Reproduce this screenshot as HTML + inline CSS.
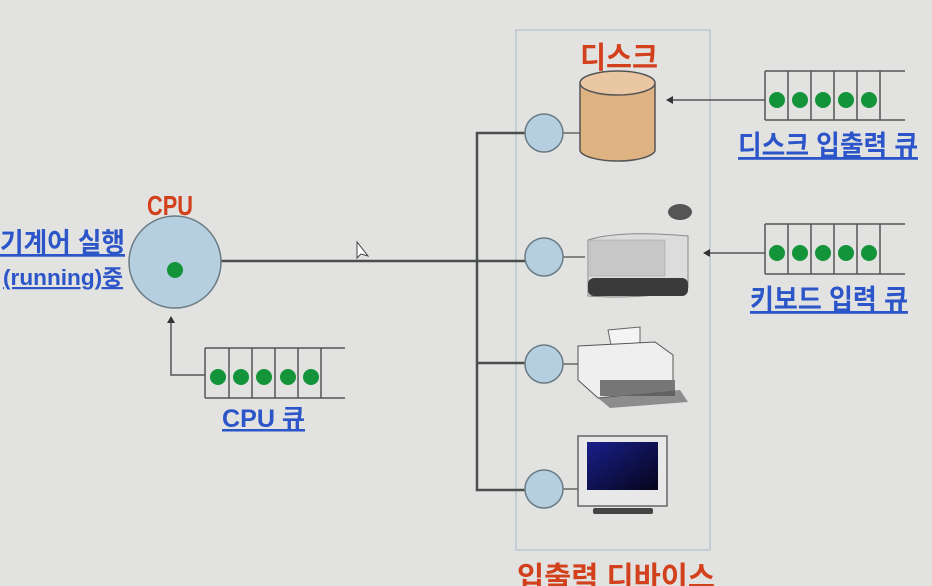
<!DOCTYPE html>
<html><head><meta charset="utf-8"><style>
body{margin:0;background:#e2e2e0;}
svg{display:block}
text{font-family:"Liberation Sans","Noto Sans CJK KR",sans-serif;font-weight:bold}
.b{fill:#2b55c8;text-decoration:underline}
.r{fill:#d2401c}
</style></head><body>
<svg width="932" height="586" viewBox="0 0 932 586">
<defs>
<linearGradient id="scr" x1="0" y1="0" x2="1" y2="1"><stop offset="0" stop-color="#1a1f8a"/><stop offset="1" stop-color="#05051a"/></linearGradient>
</defs>
<rect width="932" height="586" fill="#e2e2e0"/>
<rect x="516" y="30" width="194" height="520" fill="none" stroke="#aab8cc" stroke-width="1"/>
<g stroke="#4a4f4d" stroke-width="2.5" fill="none">
<line x1="221" y1="261" x2="525" y2="261"/>
<polyline points="525,133 477,133 477,490 525,490"/>
<line x1="477" y1="363" x2="525" y2="363"/>
</g>
<g stroke="#666" stroke-width="1.5">
<line x1="563" y1="133" x2="580" y2="133"/><line x1="563" y1="257" x2="585" y2="257"/>
<line x1="563" y1="364" x2="580" y2="364"/><line x1="563" y1="489" x2="580" y2="489"/>
</g>
<circle cx="175" cy="262" r="46" fill="#b6cfe0" stroke="#6b7b84" stroke-width="1.5"/>
<circle cx="175" cy="270" r="8" fill="#14943a"/>
<g fill="#b6cfe0" stroke="#6b7b84" stroke-width="1.5">
<circle cx="544" cy="133" r="19"/><circle cx="544" cy="257" r="19"/><circle cx="544" cy="364" r="19"/><circle cx="544" cy="489" r="19"/>
</g>
<!-- disk -->
<path d="M580 83 V151 A38 12 0 0 0 655 151 V83" fill="#deb281" stroke="#555" stroke-width="1.5"/>
<ellipse cx="617.5" cy="83" rx="37.5" ry="12" fill="#e8c7a2" stroke="#555" stroke-width="1.5"/>
<!-- keyboard -->
<path d="M588 240 Q620 230 688 236 L688 288 Q650 300 588 296 Z" fill="#dcdcdc" stroke="#888"/>
<rect x="590" y="240" width="75" height="36" fill="#c8c8c8" stroke="#999" stroke-width="0.5"/>
<rect x="588" y="278" width="100" height="18" rx="6" fill="#3a3a3a"/>
<ellipse cx="680" cy="212" rx="12" ry="8" fill="#555"/>
<!-- printer -->
<path d="M608 330 L640 327 L640 348 L612 350 Z" fill="#f4f4f4" stroke="#666"/>
<path d="M578 346 L655 342 L673 355 L673 390 L598 398 L578 380 Z" fill="#efefef" stroke="#555"/>
<rect x="600" y="380" width="75" height="16" fill="#777"/>
<path d="M598 398 L680 390 L688 402 L610 408 Z" fill="#555" opacity=".6"/>
<!-- monitor -->
<rect x="578" y="436" width="89" height="70" fill="#e8e8e8" stroke="#666" stroke-width="1.5"/>
<rect x="587" y="442" width="71" height="48" fill="url(#scr)"/>
<rect x="593" y="508" width="60" height="6" rx="2" fill="#444"/>
<!-- queues -->
<g stroke="#555" stroke-width="1.5" fill="none">
<path d="M765 71 H905 M765 120 H905 M765 71 V120 M788 71 V120 M811 71 V120 M834 71 V120 M857 71 V120 M880 71 V120"/>
<path d="M765 224 H905 M765 274 H905 M765 224 V274 M788 224 V274 M811 224 V274 M834 224 V274 M857 224 V274 M880 224 V274"/>
<path d="M205 348 H345 M205 398 H345 M205 348 V398 M229 348 V398 M252 348 V398 M275 348 V398 M298 348 V398 M321 348 V398"/>
<line x1="765" y1="100" x2="670" y2="100"/>
<line x1="765" y1="253" x2="707" y2="253"/>
<polyline points="205,375 171,375 171,322"/>
</g>
<g fill="#333"><path d="M666 100 l7 -4 v8z"/><path d="M703 253 l7 -4 v8z"/><path d="M171 316 l-4 7 h8z"/></g>
<g fill="#14943a">
<circle cx="777" cy="100" r="8"/><circle cx="800" cy="100" r="8"/><circle cx="823" cy="100" r="8"/><circle cx="846" cy="100" r="8"/><circle cx="869" cy="100" r="8"/>
<circle cx="777" cy="253" r="8"/><circle cx="800" cy="253" r="8"/><circle cx="823" cy="253" r="8"/><circle cx="846" cy="253" r="8"/><circle cx="869" cy="253" r="8"/>
<circle cx="218" cy="377" r="8"/><circle cx="241" cy="377" r="8"/><circle cx="264" cy="377" r="8"/><circle cx="288" cy="377" r="8"/><circle cx="311" cy="377" r="8"/>
</g>
<path d="M357 242 L357 258 L361 254 L368 256 Z" fill="#fff" stroke="#444"/>
<text x="147" y="215" class="r" font-size="28" textLength="46" lengthAdjust="spacingAndGlyphs">CPU</text>
<text x="0" y="252" class="b" font-size="27" textLength="125" lengthAdjust="spacingAndGlyphs">기계어 실행</text>
<text x="3" y="285" class="b" font-size="22" textLength="120" lengthAdjust="spacingAndGlyphs">(running)중</text>
<text x="222" y="427" class="b" font-size="25" textLength="83" lengthAdjust="spacingAndGlyphs">CPU 큐</text>
<text x="580" y="68" class="r" font-size="30" textLength="78" lengthAdjust="spacingAndGlyphs">디스크</text>
<text x="738" y="155" class="b" font-size="28" textLength="180" lengthAdjust="spacingAndGlyphs">디스크 입출력 큐</text>
<text x="750" y="309" class="b" font-size="28" textLength="158" lengthAdjust="spacingAndGlyphs">키보드 입력 큐</text>
<text x="517" y="588" class="r" font-size="30" textLength="198" lengthAdjust="spacingAndGlyphs">입출력 디바이스</text>
</svg>
</body></html>
